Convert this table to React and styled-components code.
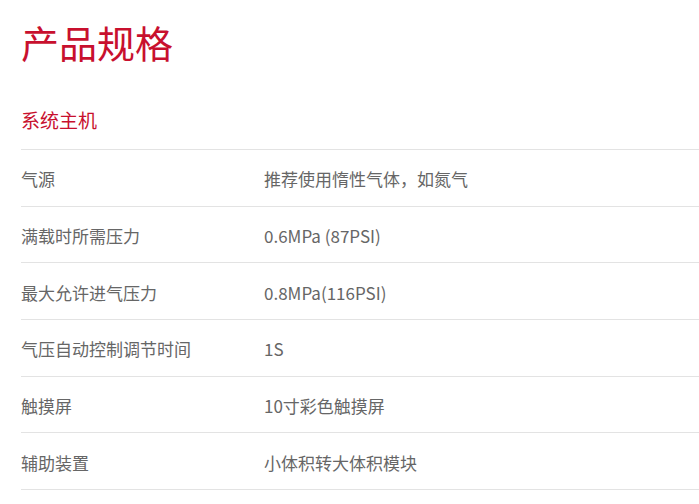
import styled, { createGlobalStyle } from "styled-components";

const GlobalStyle = createGlobalStyle`
  body {
    margin: 0;
    background: #fff;
    font-family: "Noto Sans CJK SC", "Noto Sans", sans-serif;
  }
`;

const specs = [
  ["气源", "推荐使用惰性气体，如氮气"],
  ["满载时所需压力", "0.6MPa (87PSI)"],
  ["最大允许进气压力", "0.8MPa(116PSI)"],
  ["气压自动控制调节时间", "1S"],
  ["触摸屏", "10寸彩色触摸屏"],
  ["辅助装置", "小体积转大体积模块"],
];

const Page = styled.div`
  padding: 0 0 0 21px;
`;

const Title = styled.h1`
  margin: 0;
  padding-top: 16px;
  font-size: 38px;
  line-height: 52px;
  font-weight: 400;
  color: #c8102e;
`;

const Section = styled.h2`
  margin: 0;
  padding-top: 38px;
  font-size: 19px;
  line-height: 28px;
  font-weight: 400;
  color: #c8102e;
  padding-bottom: 15px;
`;

const Table = styled.div`
  border-top: 1px solid #e3e3e3;
`;

const Row = styled.div`
  display: grid;
  grid-template-columns: 243px 1fr;
  height: 55.67px;
  align-items: center;
  border-bottom: 1px solid #e3e3e3;
  font-size: 17px;
  color: #666;
`;

const Cell = styled.div`
  padding-top: 2px;
`;

export default function App() {
  return (
    <Page>
      <GlobalStyle />
      <Title>产品规格</Title>
      <Section>系统主机</Section>
      <Table>
        {specs.map(([k, v]) => (
          <Row key={k}>
            <Cell>{k}</Cell>
            <Cell>{v}</Cell>
          </Row>
        ))}
      </Table>
    </Page>
  );
}
